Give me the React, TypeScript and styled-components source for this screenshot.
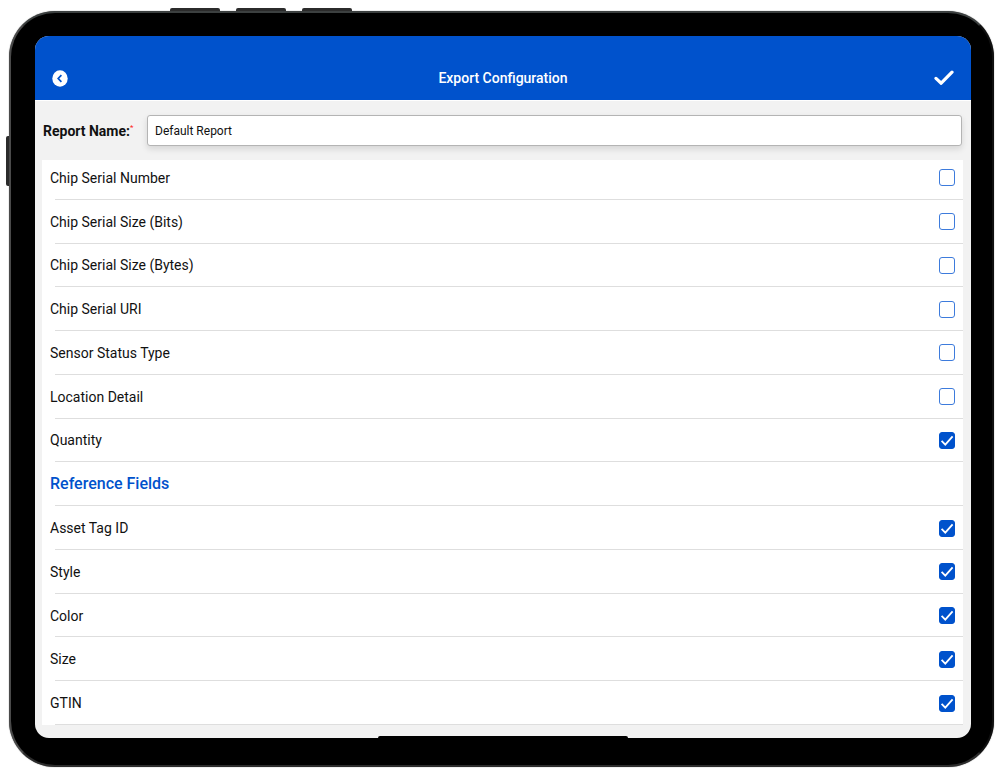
import React, { useState } from "react";
import styled, { createGlobalStyle } from "styled-components";

const BLUE = "#0052cc";

const GlobalStyle = createGlobalStyle`
  *, *::before, *::after { box-sizing: border-box; }
  body {
    margin: 0;
    background: #fff;
    color: #111;
    font-family: Roboto, "Liberation Sans", sans-serif;
    font-size: 14px;
  }
  button, input { font: inherit; color: inherit; }
`;

const Stage = styled.div`
  display: flex;
  min-height: 100vh;
  padding: 11px 6px 7px 9px;
`;

const Tablet = styled.div`
  position: relative;
  display: flex;
  flex: 1;
  padding: 23px 21px 27px 24px;
  background: #000;
  border: 2px solid #1c1c1c;
  border-color: #3c4040 #101010 #2c2c2c #4a4a4a;
  border-radius: 46px;
  box-shadow: 0 0 1px #555;
`;

const TopKey = styled.span<{ $left: number }>`
  position: absolute;
  top: -5px;
  left: ${(p) => p.$left}px;
  width: 50px;
  height: 3px;
  background: #2b2b2b;
  border-radius: 2px 2px 0 0;
`;

const SideKey = styled.span`
  position: absolute;
  top: 123px;
  left: -5px;
  width: 3px;
  height: 50px;
  background: #2b2b2b;
  border-radius: 2px 0 0 2px;
`;

const Screen = styled.main`
  position: relative;
  display: flex;
  flex: 1;
  flex-direction: column;
  overflow: hidden;
  background: #f2f2f2;
  border-radius: 14px;
`;

const HomeBar = styled.span`
  position: absolute;
  bottom: 0;
  left: 50%;
  width: 250px;
  height: 2px;
  background: #000;
  border-radius: 2px 2px 0 0;
  transform: translateX(-50%);
`;

const Header = styled.header`
  display: grid;
  grid-template-columns: 40px 1fr 40px;
  align-items: center;
  height: 64px;
  padding: 20px 8px 0;
  background: ${BLUE};
`;

const Title = styled.h1`
  margin: 0;
  color: #fff;
  font-size: 14px;
  font-weight: 500;
  line-height: 20px;
  text-align: center;
`;

const IconButton = styled.button<{ $end?: boolean }>`
  display: flex;
  align-items: center;
  justify-content: ${(p) => (p.$end ? "flex-end" : "flex-start")};
  height: 32px;
  padding: 0 9px;
  background: none;
  border: 0;
  cursor: pointer;
`;

const NameForm = styled.div`
  position: relative;
  z-index: 1;
  display: flex;
  align-items: center;
  height: 60px;
  margin-bottom: -4px;
  padding: 0 9px 0 8px;
  background: #f2f2f2;
  border-top: 1px solid #fff;
`;

const NameLabel = styled.label`
  width: 104px;
  font-size: 14px;
  font-weight: 700;
  line-height: 20px;
  white-space: nowrap;
`;

const Required = styled.sup`
  color: #f22;
  font-size: 8px;
  font-weight: 400;
  line-height: 8px;
`;

const NameInput = styled.input`
  flex: 1;
  min-width: 0;
  height: 31px;
  padding: 0 7px;
  background: #fff;
  border: 1px solid #b4b4b4;
  border-radius: 3px;
  box-shadow: 0 3px 6px rgba(0, 0, 0, 0.12);
  font-size: 12px;
`;

const FieldList = styled.ul`
  display: grid;
  flex: 1;
  grid-auto-rows: 1fr;
  margin: 0 8px 13px 7px;
  padding: 0;
  background: #fff;
  list-style: none;
`;

const Row = styled.li`
  position: relative;
  display: flex;
  align-items: center;
  min-height: 40px;

  &::after {
    position: absolute;
    right: 0;
    bottom: 0;
    left: 13px;
    height: 1px;
    background: #dedede;
    content: "";
  }
`;

const RowLabel = styled.label`
  display: flex;
  flex: 1;
  align-items: center;
  justify-content: space-between;
  padding: 0 8px;
  line-height: 20px;
`;

const SectionTitle = styled.h2`
  margin: 0;
  padding: 0 8px;
  color: ${BLUE};
  font-size: 16px;
  font-weight: 500;
  line-height: 20px;
`;

const CheckWrap = styled.span`
  display: grid;
  width: 16px;
  height: 17px;

  > * { grid-area: 1 / 1; }
  svg { pointer-events: none; }
`;

const CheckInput = styled.input`
  width: 16px;
  height: 17px;
  margin: 0;
  appearance: none;
  background: #fff;
  border: 1px solid #3d7bdc;
  border-radius: 3px;

  &:checked {
    background: ${BLUE};
    border-color: ${BLUE};
  }
`;

type Entry = { name: string; checked?: boolean; section?: boolean };

const entries: Entry[] = [
  { name: "Chip Serial Number" },
  { name: "Chip Serial Size (Bits)" },
  { name: "Chip Serial Size (Bytes)" },
  { name: "Chip Serial URI" },
  { name: "Sensor Status Type" },
  { name: "Location Detail" },
  { name: "Quantity", checked: true },
  { name: "Reference Fields", section: true },
  { name: "Asset Tag ID", checked: true },
  { name: "Style", checked: true },
  { name: "Color", checked: true },
  { name: "Size", checked: true },
  { name: "GTIN", checked: true },
];

function Field({ entry }: { entry: Entry }) {
  const [on, setOn] = useState(!!entry.checked);
  return (
    <Row>
      <RowLabel>
        {entry.name}
        <CheckWrap>
          <CheckInput type="checkbox" checked={on} onChange={() => setOn(!on)} />
          {on && (
            <svg width="16" height="17" viewBox="0 0 16 17" fill="none" aria-hidden="true">
              <path d="M2.6 8.8 6.3 12.6 13.6 4.4" stroke="#fff" strokeWidth="1.8" />
            </svg>
          )}
        </CheckWrap>
      </RowLabel>
    </Row>
  );
}

export default function App() {
  const [name, setName] = useState("Default Report");
  return (
    <>
      <GlobalStyle />
      <Stage>
        <Tablet>
          <TopKey $left={159} />
          <TopKey $left={225} />
          <TopKey $left={291} />
          <SideKey />
          <Screen>
            <Header>
              <IconButton type="button" aria-label="Back">
                <svg width="16" height="17" viewBox="0 0 16 17" fill="none">
                  <ellipse cx="8" cy="8.5" rx="7.7" ry="8.3" fill="#fff" />
                  <path d="M9.4 5.2 6.2 8.5l3.2 3.3" stroke={BLUE} strokeWidth="1.7" />
                </svg>
              </IconButton>
              <Title>Export Configuration</Title>
              <IconButton type="button" aria-label="Save" $end>
                <svg width="20" height="16" viewBox="0 0 20 16" fill="none">
                  <path
                    d="M2 8.4 7.2 13.2 18 2.2"
                    stroke="#fff"
                    strokeWidth="3.2"
                    strokeLinecap="round"
                    strokeLinejoin="round"
                  />
                </svg>
              </IconButton>
            </Header>
            <NameForm>
              <NameLabel htmlFor="report-name">
                Report Name:<Required>*</Required>
              </NameLabel>
              <NameInput
                id="report-name"
                type="text"
                value={name}
                onChange={(e) => setName(e.target.value)}
              />
            </NameForm>
            <FieldList>
              {entries.map((entry) =>
                entry.section ? (
                  <Row key={entry.name}>
                    <SectionTitle>{entry.name}</SectionTitle>
                  </Row>
                ) : (
                  <Field key={entry.name} entry={entry} />
                )
              )}
            </FieldList>
            <HomeBar />
          </Screen>
        </Tablet>
      </Stage>
    </>
  );
}
